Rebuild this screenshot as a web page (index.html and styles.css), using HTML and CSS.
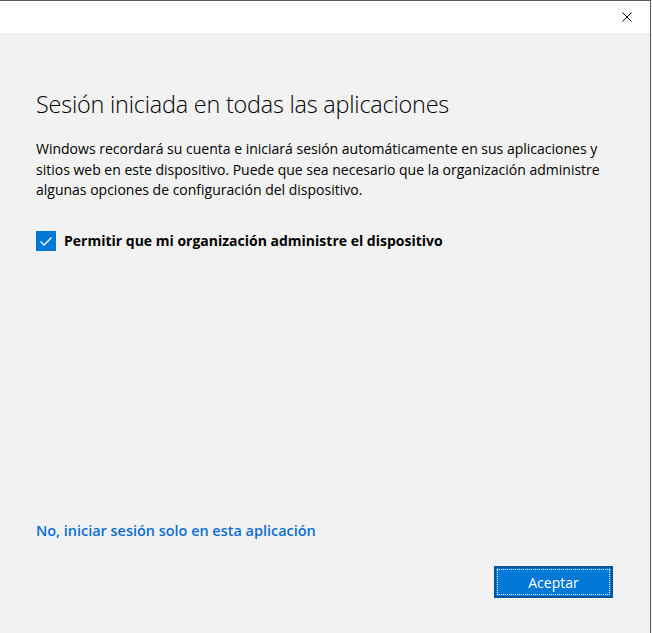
FILE: index.html
```html
<!DOCTYPE html>
<html lang="es">
<head>
<meta charset="utf-8">
<title>Sesión iniciada</title>
<link rel="stylesheet" href="styles.css">
</head>
<body>
<div class="window">
  <div class="titlebar">
    <button class="close" aria-label="Cerrar">
      <svg width="10" height="10" viewBox="0 0 10 10"><path d="M0.5 0.5 L9.5 9.5 M9.5 0.5 L0.5 9.5" stroke="#000" stroke-width="1" fill="none"/></svg>
    </button>
  </div>
  <div class="content">
    <h1 class="title">Sesión iniciada en todas las aplicaciones</h1>
    <p class="desc">Windows recordará su cuenta e iniciará sesión automáticamente en sus aplicaciones y sitios web en este dispositivo. Puede que sea necesario que la organización administre algunas opciones de configuración del dispositivo.</p>
    <label class="check">
      <span class="box">
        <svg width="20" height="20" viewBox="0 0 20 20"><path d="M4.5 10.5 L8 14 L15.5 6.5" stroke="#fff" stroke-width="1.3" fill="none"/></svg>
      </span>
      <span class="check-label">Permitir que mi organización administre el dispositivo</span>
    </label>
    <a class="link" href="#">No, iniciar sesión solo en esta aplicación</a>
    <div class="actions">
      <button class="primary"><span class="focus">Aceptar</span></button>
    </div>
  </div>
</div>
</body>
</html>
```

FILE: styles.css
```css
html, body {
  margin: 0;
  padding: 0;
  background: #f2f2f2;
}
body {
  font-family: "Open Sans", "Noto Sans", sans-serif;
  color: #000;
}
.window {
  width: 650px;
  height: 632px;
  border-top: 1px solid #5c5c5c;
  border-right: 1px solid #5c5c5c;
  display: flex;
  flex-direction: column;
}
.titlebar {
  height: 32px;
  background: #fff;
  display: flex;
  justify-content: flex-end;
}
.close {
  width: 46px;
  height: 32px;
  border: 0;
  background: transparent;
  padding: 0;
  display: flex;
  align-items: center;
  justify-content: center;
}
.content {
  flex: 1;
  display: flex;
  flex-direction: column;
  padding: 0 37px 35px 36px;
  background: #f2f2f2;
}
.title {
  margin: 55px 0 0;
  font-weight: 300;
  font-size: 23.4px;
  line-height: 32px;
  letter-spacing: -0.2px;
}
.desc {
  margin: 19px 0 0;
  font-size: 14px;
  line-height: 20.5px;
  width: 570px;
}
.check {
  margin-top: 30px;
  display: flex;
  align-items: center;
  gap: 8px;
}
.box {
  width: 20px;
  height: 20px;
  background: #0078d7;
  display: block;
}
.box svg { display: block; }
.check-label {
  font-weight: 700;
  font-size: 14px;
}
.link {
  margin-top: auto;
  font-weight: 600;
  font-size: 14.45px;
  color: #0a6ed1;
  text-decoration: none;
  line-height: 20px;
  align-self: flex-start;
}
.actions {
  margin-top: 25px;
  display: flex;
  justify-content: flex-end;
}
.primary {
  width: 119px;
  height: 32px;
  background: #0078d7;
  border: 2px solid #00559b;
  padding: 1px;
  font-family: inherit;
  font-size: 14px;
  color: #fff;
}
.focus {
  display: flex;
  align-items: center;
  justify-content: center;
  height: 100%;
  border: 1px dotted #fff;
  box-sizing: border-box;
}
```
